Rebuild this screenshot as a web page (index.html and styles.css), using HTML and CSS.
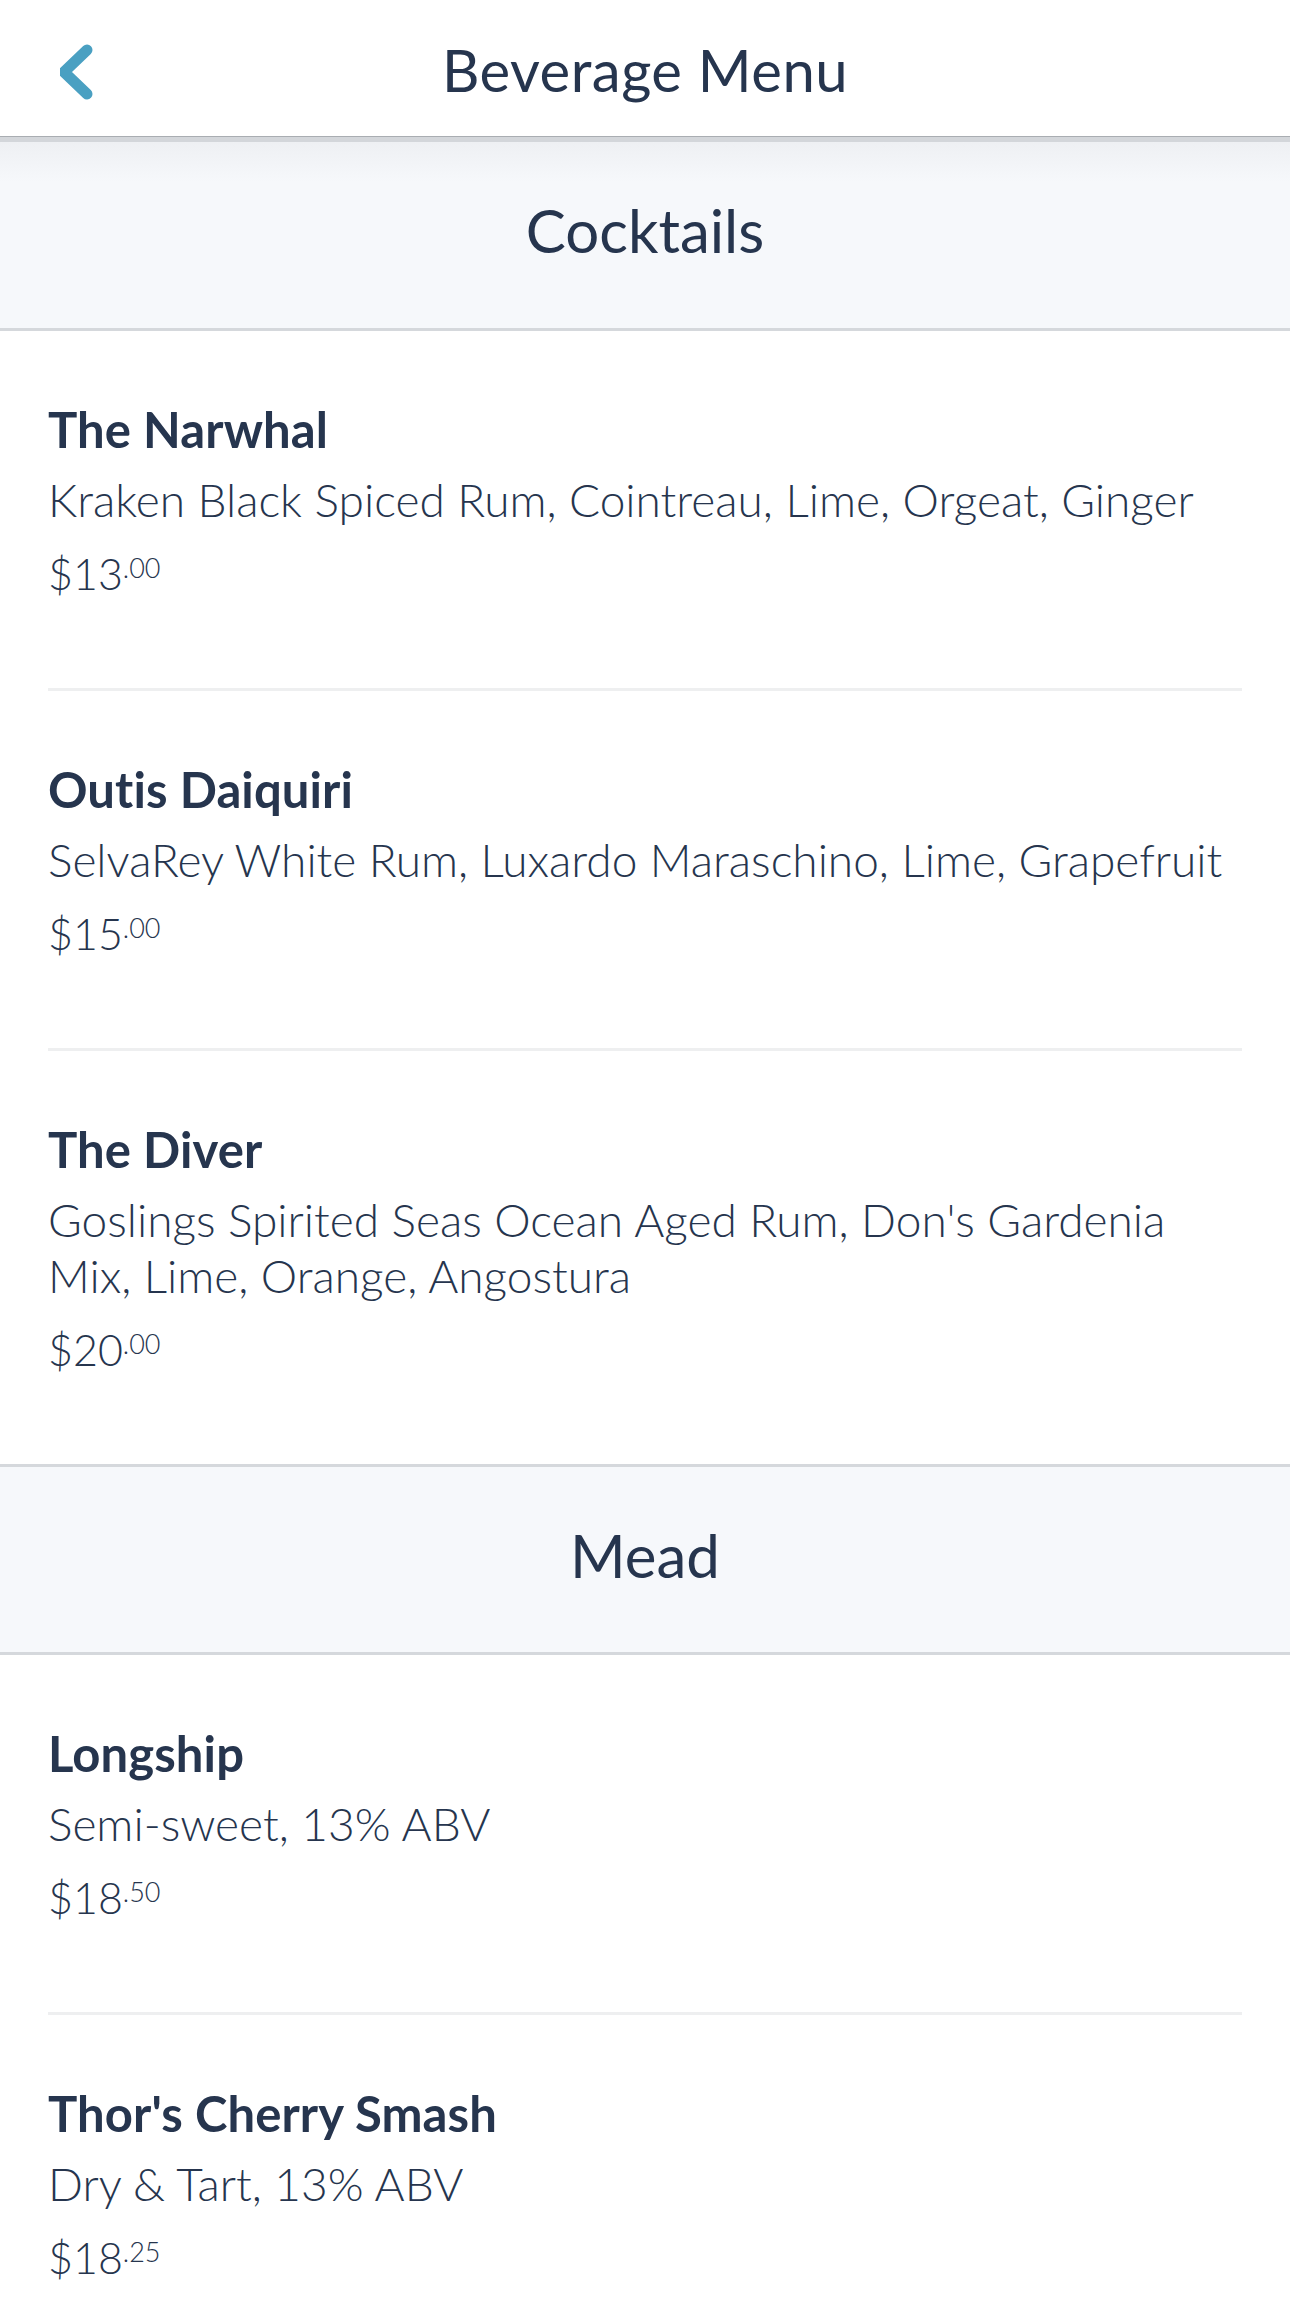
FILE: index.html
```html
<!DOCTYPE html>
<html lang="en">
<head>
  <meta charset="UTF-8" />
  <meta name="viewport" content="width=device-width, initial-scale=1.0"/>
  <title>Beverage Menu</title>
  <link rel="stylesheet" href="styles.css">
</head>
<body>
  <header class="topbar">
    <a class="back" href="#" aria-label="Back">
      <svg width="40" height="60" viewBox="0 0 40 60">
        <polyline points="27,9 4,31 27,53" fill="none" stroke="#4aa0c2" stroke-width="11" stroke-linecap="round" stroke-linejoin="round"/>
      </svg>
    </a>
    <h1>Beverage Menu</h1>
  </header>

  <section class="group first">
    <h2>Cocktails</h2>
  </section>
  <ul class="items">
    <li>
      <div class="name">The Narwhal</div>
      <div class="desc">Kraken Black Spiced Rum, Cointreau, Lime, Orgeat, Ginger</div>
      <div class="price">$13<sup>.00</sup></div>
    </li>
    <li>
      <div class="name">Outis Daiquiri</div>
      <div class="desc">SelvaRey White Rum, Luxardo Maraschino, Lime, Grapefruit</div>
      <div class="price">$15<sup>.00</sup></div>
    </li>
    <li>
      <div class="name">The Diver</div>
      <div class="desc">Goslings Spirited Seas Ocean Aged Rum, Don's Gardenia Mix, Lime, Orange, Angostura</div>
      <div class="price">$20<sup>.00</sup></div>
    </li>
  </ul>

  <section class="group">
    <h2>Mead</h2>
  </section>
  <ul class="items">
    <li>
      <div class="name">Longship</div>
      <div class="desc">Semi-sweet, 13% ABV</div>
      <div class="price">$18<sup>.50</sup></div>
    </li>
    <li>
      <div class="name">Thor's Cherry Smash</div>
      <div class="desc">Dry &amp; Tart, 13% ABV</div>
      <div class="price">$18<sup>.25</sup></div>
    </li>
  </ul>
</body>
</html>
```

FILE: styles.css
```css
body {
  margin: 0;
  font-family: Lato, "Open Sans", sans-serif;
  color: #26354e;
  background: #fff;
}
.topbar {
  height: 136px;
  display: flex;
  align-items: center;
  justify-content: center;
  position: relative;
  background: #fff;
  border-bottom: 1px solid #a9adb2;
}
.back {
  position: absolute;
  left: 60px;
  top: 41px;
  display: block;
  line-height: 0;
}
.topbar h1 {
  margin: 0;
  font-size: 58px;
  font-weight: 400;
  letter-spacing: 0.5px;
  padding-top: 2px;
}
.group {
  height: 185px;
  background: #f6f8fb;
  border-top: 3px solid #d5d8dc;
  border-bottom: 3px solid #d5d8dc;
  text-align: center;
}
.group.first {
  border-top: 5px solid #d3d6da;
  height: 186px;
  background: linear-gradient(#eef0f3, #f6f8fb 40px);
}
.group h2 {
  margin: 0;
  padding-top: 52px;
  font-size: 60px;
  line-height: 72px;
  font-weight: 400;
}
.items {
  list-style: none;
  margin: 0;
  padding: 0;
}
.items li {
  margin: 0 48px;
  padding: 70px 0 86px;
  border-top: 3px solid #eeeff0;
}
.items li:first-child {
  border-top: none;
}
.name {
  font-size: 49px;
  line-height: 56px;
  font-weight: 700;
  letter-spacing: 0.1px;
}
.desc {
  margin-top: 15px;
  font-size: 46px;
  line-height: 56px;
  font-weight: 300;
}
.price {
  margin-top: 18px;
  font-size: 43px;
  line-height: 56px;
  font-weight: 300;
}
.price sup {
  font-size: 27px;
  line-height: 0;
  vertical-align: 12px;
}
```
